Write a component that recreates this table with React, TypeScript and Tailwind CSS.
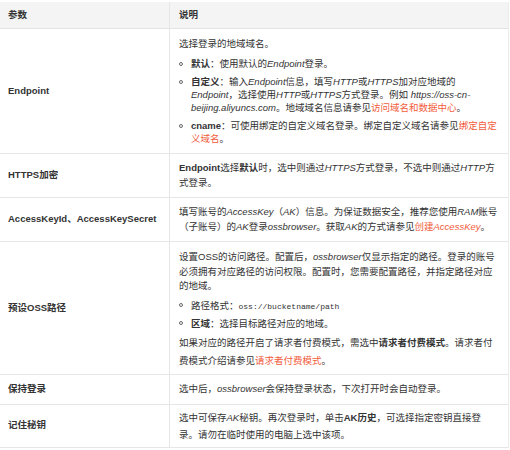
import React from "react";

const font = "font-['Liberation_Sans','Noto_Sans_CJK_SC',sans-serif]";

const A = ({ children }: { children: React.ReactNode }) => (
  <span className="text-[#f25c3c]">{children}</span>
);

const Bullet = ({ children, lh = "leading-[13px]" }: { children: React.ReactNode; lh?: string }) => (
  <div className={`flex ${lh}`}>
    <span className="flex w-[12px] shrink-0 items-center self-start pt-[5px]">
      <span className="block h-[4px] w-[4px] rounded-full border border-[#666]" />
    </span>
    <div className="min-w-0 flex-1">{children}</div>
  </div>
);

const Row = ({ label, children, pad }: { label: string; children: React.ReactNode; pad: string }) => (
  <div className="grid grid-cols-[170px_1fr] border-b border-[#e6e6e6]">
    <div className="flex items-center border-r border-[#e6e6e6] pl-[8px] font-bold text-[#333]">{label}</div>
    <div className={`pl-[9px] pr-[10px] ${pad}`}>{children}</div>
  </div>
);

export default function App() {
  return (
    <div className={`${font} w-[510px] bg-white pt-[2px] text-[9.5px] text-[#333]`}>
      <div className="w-[509px] border-r border-[#ececec]">
        {/* Header */}
        <div className="grid h-[27px] grid-cols-[170px_1fr] border-b border-[#e3e3e3] bg-[#f4f4f4] font-bold">
          <div className="flex items-center border-r border-[#e6e6e6] pl-[8px]">参数</div>
          <div className="flex items-center pl-[9px]">说明</div>
        </div>

        <Row label="Endpoint" pad="pt-[8px] pb-[8px]">
          <p className="leading-[13px]">选择登录的地域域名。</p>
          <div className="mt-[7px] flex flex-col gap-[5px]">
            <Bullet>
              <b>默认</b>：使用默认的<i>Endpoint</i>登录。
            </Bullet>
            <Bullet>
              <b>自定义</b>：输入<i>Endpoint</i>信息，填写<i>HTTP</i>或<i>HTTPS</i>加对应地域的<i>Endpoint</i>，选择使用<i>HTTP</i>或<i>HTTPS</i>方式登录。例如 <i>https://oss-cn-beijing.aliyuncs.com</i>。地域域名信息请参见<A>访问域名和数据中心</A>。
            </Bullet>
            <Bullet>
              <b>cname</b>：可使用绑定的自定义域名登录。绑定自定义域名请参见<A>绑定自定义域名</A>。
            </Bullet>
          </div>
        </Row>

        <Row label="HTTPS加密" pad="pt-[6px] pb-[7px]">
          <p className="leading-[15px]">
            <b>Endpoint</b>选择<b>默认</b>时，选中则通过<i>HTTPS</i>方式登录，不选中则通过<i>HTTP</i>方式登录。
          </p>
        </Row>

        <Row label="AccessKeyId、AccessKeySecret" pad="pt-[6px] pb-[7px]">
          <p className="leading-[15px]">
            填写账号的<i>AccessKey</i>（<i>AK</i>）信息。为保证数据安全，推荐您使用<i>RAM</i>账号（子账号）的<i>AK</i>登录<i>ossbrowser</i>。获取<i>AK</i>的方式请参见<A>创建<i>AccessKey</i></A>。
          </p>
        </Row>

        <Row label="预设OSS路径" pad="pt-[8px] pb-[4px]">
          <p className="leading-[14.5px]">
            设置OSS的访问路径。配置后，<i>ossbrowser</i>仅显示指定的路径。登录的账号必须拥有对应路径的访问权限。配置时，您需要配置路径，并指定路径对应的地域。
          </p>
          <div className="mt-[4px] flex flex-col gap-[2px]">
            <Bullet lh="leading-[15px]">
              路径格式：<code className="font-['Liberation_Mono',monospace] text-[8px]">oss://bucketname/path</code>
            </Bullet>
            <Bullet lh="leading-[15px]">
              <b>区域</b>：选择目标路径对应的地域。
            </Bullet>
          </div>
          <p className="mt-[3px] leading-[18px]">
            如果对应的路径开启了请求者付费模式，需选中<b>请求者付费模式</b>。请求者付费模式介绍请参见<A>请求者付费模式</A>。
          </p>
        </Row>

        <Row label="保持登录" pad="pt-[6px] pb-[8px]">
          <p className="leading-[15px]">
            选中后，<i>ossbrowser</i>会保持登录状态，下次打开时会自动登录。
          </p>
        </Row>

        <Row label="记住秘钥" pad="pt-[4px] pb-[4px]">
          <p className="leading-[17px]">
            选中可保存<i>AK</i>秘钥。再次登录时，单击<b>AK历史</b>，可选择指定密钥直接登录。请勿在临时使用的电脑上选中该项。
          </p>
        </Row>
      </div>
    </div>
  );
}
